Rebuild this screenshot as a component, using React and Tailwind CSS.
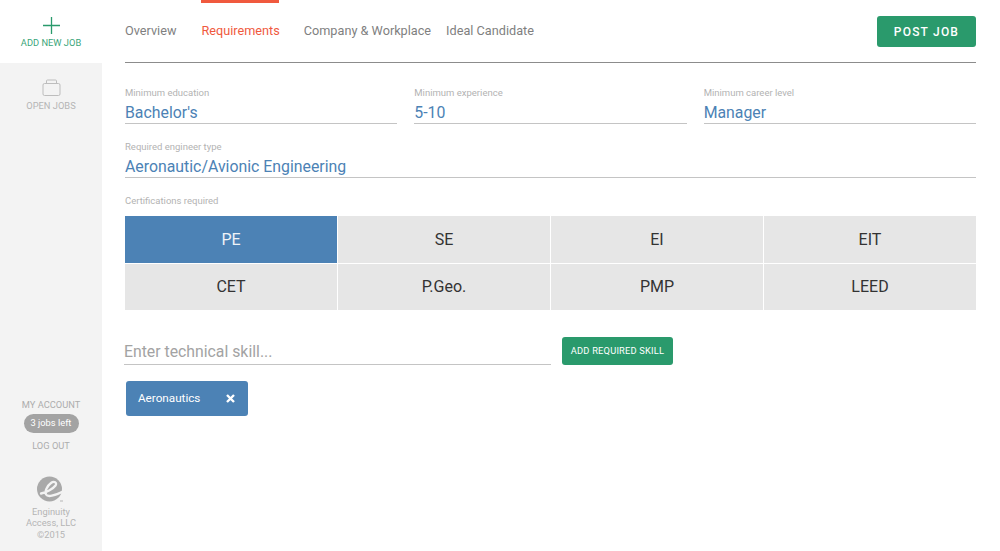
import React from "react";

const field = (label, value) => (
  <div>
    <div className="text-[9.500px] leading-[15px] text-[#b3b3b3]">{label}</div>
    <div className="h-[24px] border-b border-[#c4c4c4] pt-[3px] text-[15.850px] leading-[20px] text-[#4c82b5]">{value}</div>
  </div>
);

const certs = ["PE", "SE", "EI", "EIT", "CET", "P.Geo.", "PMP", "LEED"];

export default function App() {
  return (
    <div className="flex h-[551px] w-[1000px] overflow-hidden bg-white font-['Roboto',sans-serif]">
      <aside className="flex w-[102px] shrink-0 flex-col bg-[#f3f3f3]">
        <div className="flex h-[63px] flex-col items-center bg-white pt-[17px]">
          <svg width="17" height="17" viewBox="0 0 17 17" fill="none" stroke="#2a9a6c" strokeWidth="1.300">
            <path d="M8.500 0v17M0 8.500h17" />
          </svg>
          <div className="mt-[3px] text-[9.300px] leading-[12px] text-[#3aa57a]">ADD NEW JOB</div>
        </div>
        <div className="flex flex-col items-center pt-[16px]">
          <svg width="20" height="18" viewBox="0 0 20 18" fill="none" stroke="#bdbdbd" strokeWidth="1">
            <rect x="2" y="4.500" width="17" height="12" rx="1.500" />
            <path d="M5.500 4.500v-2.500a1 1 0 0 1 1-1h8a1 1 0 0 1 1 1v2.500" />
          </svg>
          <div className="mt-[3px] text-[9.300px] leading-[12px] text-[#b5b5b5]">OPEN JOBS</div>
        </div>
        <div className="mt-auto flex flex-col items-center pb-[11px]">
          <div className="text-[9.300px] leading-[12px] text-[#adadad]">MY ACCOUNT</div>
          <div className="mt-[3px] flex h-[19px] w-[55px] items-center justify-center rounded-full bg-[#a3a3a3] text-[9.300px] text-white">3 jobs left</div>
          <div className="mt-[7px] text-[9.300px] leading-[12px] text-[#adadad]">LOG OUT</div>
          <svg className="mt-[24px]" width="30" height="27" viewBox="0 0 30 27">
            <circle cx="13.500" cy="13" r="12.500" fill="#a9a9a9" />
            <path d="M5 17.500C10 16.500 17 13 19.500 9.500 21.500 6.500 18 4.500 15 7 11 10 8.500 15.500 10 18.500 11.500 21 18 20 27 15.500" fill="none" stroke="#f3f3f3" strokeWidth="2.300" strokeLinecap="round" strokeLinejoin="round" />
            <path d="M24 25h3" stroke="#b5b5b5" strokeWidth="1" />
          </svg>
          <div className="mt-[3px] w-[70px] text-center text-[9.300px] leading-[11.500px] text-[#b5b5b5]">Enginuity Access, LLC ©2015</div>
        </div>
      </aside>
      <main className="ml-[23px] w-[851px]">
        <header className="relative flex h-[63px] border-b-[1px] border-[#8c8c8c]">
          <nav className="flex pt-[22px] text-[12.700px] leading-[18px] text-[#7f7f7f]">
            <span>Overview</span>
            <span className="relative ml-[25px] text-[#f0593e]">
              Requirements
              <span className="absolute -top-[22px] left-0 h-[3px] w-[78px] bg-[#f0593e]" />
            </span>
            <span className="ml-[24px]">Company &amp; Workplace</span>
            <span className="ml-[15px]">Ideal Candidate</span>
          </nav>
          <button className="mt-[16px] ml-auto h-[31px] w-[99px] rounded-[3px] bg-[#2a9a6c] text-[12px] font-medium tracking-[1.200px] text-white">POST JOB</button>
        </header>
        <div className="mt-[22px] grid grid-cols-3 gap-x-[17px]">
          {field("Minimum education", "Bachelor's")}
          {field("Minimum experience", "5-10")}
          {field("Minimum career level", "Manager")}
        </div>
        <div className="mt-[15px]">{field("Required engineer type", "Aeronautic/Avionic Engineering")}</div>
        <div className="mt-[15px] text-[9.500px] leading-[15px] text-[#b3b3b3]">Certifications required</div>
        <div className="mt-[8px] grid grid-cols-4 gap-[1px]">
          {certs.map((c, i) => (
            <div key={c} className={`flex h-[46.500px] items-center justify-center pt-[1px] text-[16px] ${i === 0 ? "bg-[#4c82b5] text-[#eef3f8]" : "bg-[#e6e6e6] text-[#333]"}`}>{c}</div>
          ))}
        </div>
        <div className="mt-[27px] flex items-start">
          <div className="-ml-[1px] h-[28px] w-[427px] border-b border-[#c4c4c4] text-[15.800px] leading-[30px] text-[#a3a3a3]">Enter technical skill...</div>
          <button className="ml-[11px] h-[28px] w-[111px] rounded-[3px] bg-[#2a9a6c] text-[9.300px] tracking-[0.200px] text-white">ADD REQUIRED SKILL</button>
        </div>
        <div className="mt-[16px] ml-[1px] flex h-[35px] w-[122px] items-center justify-between rounded-[3px] bg-[#4c82b5] pr-[13px] pl-[12px] text-[11.700px] text-white">
          <span>Aeronautics</span>
          <svg width="9" height="9" viewBox="0 0 9 9" stroke="white" strokeWidth="2.400"><path d="M1 1l7 7M8 1l-7 7" /></svg>
        </div>
      </main>
    </div>
  );
}
